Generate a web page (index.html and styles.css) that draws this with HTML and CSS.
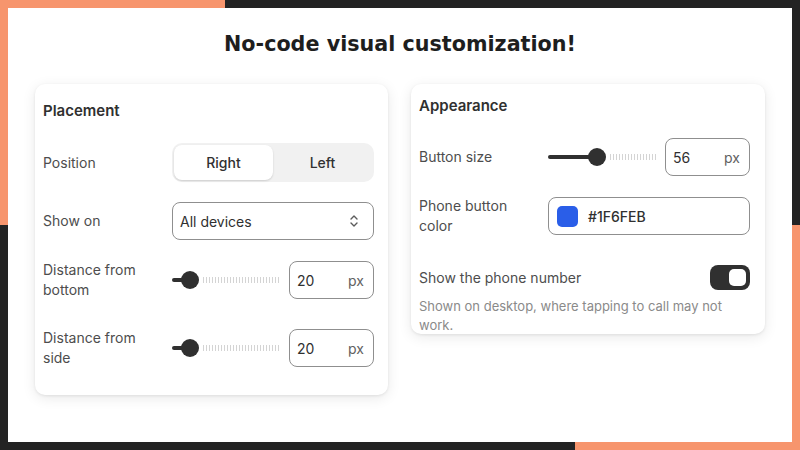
FILE: index.html
```html
<!DOCTYPE html>
<html>
<head>
    <title>No-code visual customization</title>
    <link rel="stylesheet" href="styles.css">
</head>
<body>
    <div class="frame">
        <div class="panel">
            <h1>No-code visual customization!</h1>
            <div class="cards">
                <div class="card card-left">
                    <h2>Placement</h2>
                    <div class="row">
                        <div class="label">Position</div>
                        <div class="segmented">
                            <div class="segment active">Right</div>
                            <div class="segment">Left</div>
                        </div>
                    </div>
                    <div class="row">
                        <div class="label">Show on</div>
                        <div class="select">
                            <span>All devices</span>
                            <svg class="chevrons" width="10" height="16" viewBox="0 0 10 16">
                                <path d="M2 6 L5 3 L8 6" fill="none" stroke="#5c5c5c" stroke-width="1.4" stroke-linecap="round" stroke-linejoin="round"/>
                                <path d="M2 10 L5 13 L8 10" fill="none" stroke="#5c5c5c" stroke-width="1.4" stroke-linecap="round" stroke-linejoin="round"/>
                            </svg>
                        </div>
                    </div>
                    <div class="row">
                        <div class="label">Distance from<br>bottom</div>
                        <div class="slider-group">
                            <div class="slider">
                                <div class="fill" style="width: 18px"></div>
                                <div class="thumb"></div>
                                <div class="rest"></div>
                            </div>
                            <div class="num-input"><span>20</span><span class="unit">px</span></div>
                        </div>
                    </div>
                    <div class="row row-spaced">
                        <div class="label">Distance from<br>side</div>
                        <div class="slider-group">
                            <div class="slider">
                                <div class="fill" style="width: 18px"></div>
                                <div class="thumb"></div>
                                <div class="rest"></div>
                            </div>
                            <div class="num-input"><span>20</span><span class="unit">px</span></div>
                        </div>
                    </div>
                </div>

                <div class="card card-right">
                    <h2>Appearance</h2>
                    <div class="row">
                        <div class="label">Button size</div>
                        <div class="slider-group">
                            <div class="slider">
                                <div class="fill" style="width: 49px"></div>
                                <div class="thumb"></div>
                                <div class="rest"></div>
                            </div>
                            <div class="num-input"><span>56</span><span class="unit">px</span></div>
                        </div>
                    </div>
                    <div class="row">
                        <div class="label">Phone button<br>color</div>
                        <div class="color-input">
                            <div class="swatch"></div>
                            <span>#1F6FEB</span>
                        </div>
                    </div>
                    <div class="toggle-row">
                        <div class="label">Show the phone number</div>
                        <div class="toggle"><div class="knob"></div></div>
                    </div>
                    <p class="help">Shown on desktop, where tapping to call may not work.</p>
                </div>
            </div>
        </div>
    </div>
</body>
</html>
```

FILE: styles.css
```css
body {
    margin: 0;
    padding: 0;
    font-family: Inter, "Noto Sans", sans-serif;
}
.frame {
    width: 800px;
    height: 450px;
    box-sizing: border-box;
    padding: 8px;
    background:
        linear-gradient(#f7956d, #f7956d) left top / 225px 225px no-repeat,
        linear-gradient(#f7956d, #f7956d) right bottom / 225px 225px no-repeat,
        #232323;
}
.panel {
    height: 100%;
    background-color: #ffffff;
    box-sizing: border-box;
    padding: 24px 27px 0 27px;
}
h1 {
    margin: 0;
    text-align: center;
    font-family: "DejaVu Sans", sans-serif;
    font-weight: bold;
    font-size: 20.7px;
    line-height: 24px;
    color: #1e1e1e;
}
.cards {
    display: flex;
    gap: 23px;
    align-items: flex-start;
    margin-top: 28px;
}
.card {
    width: 353px;
    box-sizing: border-box;
    background-color: #ffffff;
    border-radius: 10px;
    box-shadow: 0 1px 3px rgba(0, 0, 0, 0.08), 0 3px 14px rgba(0, 0, 0, 0.09);
    display: flex;
    flex-direction: column;
}
.card-left {
    padding: 17px 14px 27px 8px;
    gap: 20px;
}
.card-right {
    width: 354px;
    height: 250px;
    overflow: hidden;
    padding: 12px 15px 0 8px;
    gap: 20px;
}
h2 {
    margin: 0 0 2px 0;
    font-size: 15px;
    line-height: 20px;
    font-weight: 600;
    color: #303030;
}
.row {
    display: flex;
    align-items: center;
}
.row-spaced {
    margin-top: 8px;
}
.label {
    width: 129px;
    flex-shrink: 0;
    font-size: 14px;
    line-height: 20px;
    color: #4d4d4d;
}
.segmented {
    width: 202px;
    height: 39px;
    box-sizing: border-box;
    padding: 2px;
    background-color: #f1f1f1;
    border-radius: 10px;
    display: flex;
}
.segment {
    flex: 1;
    display: flex;
    align-items: center;
    justify-content: center;
    font-size: 14px;
    font-weight: 500;
    color: #303030;
    border-radius: 8px;
}
.segment.active {
    background-color: #ffffff;
    box-shadow: 0 1px 2px rgba(0, 0, 0, 0.15);
}
.select {
    width: 202px;
    height: 38px;
    box-sizing: border-box;
    border: 1px solid #8f8f8f;
    border-radius: 8px;
    padding: 0 14px 0 7px;
    display: flex;
    align-items: center;
    justify-content: space-between;
    font-size: 14px;
    color: #303030;
}
.slider-group {
    width: 202px;
    display: flex;
    align-items: center;
    gap: 9px;
}
.slider {
    width: 108px;
    height: 20px;
    display: flex;
    align-items: center;
}
.slider .fill {
    height: 4px;
    background-color: #303030;
    border-radius: 2px 0 0 2px;
}
.slider .thumb {
    width: 18px;
    height: 18px;
    margin-left: -9px;
    margin-right: -9px;
    border-radius: 50%;
    background-color: #303030;
    position: relative;
}
.slider .rest {
    flex: 1;
    height: 6px;
    margin-left: 13px;
    background: repeating-linear-gradient(to right, #d4d4d4 0, #d4d4d4 1px, transparent 1px, transparent 3px);
}
.num-input {
    width: 85px;
    height: 38px;
    box-sizing: border-box;
    border: 1px solid #8f8f8f;
    border-radius: 8px;
    padding: 0 9px 0 7px;
    display: flex;
    align-items: center;
    justify-content: space-between;
    font-size: 14px;
    color: #303030;
}
.unit {
    color: #616161;
}
.color-input {
    width: 202px;
    height: 38px;
    box-sizing: border-box;
    border: 1px solid #8f8f8f;
    border-radius: 8px;
    padding: 0 8px;
    display: flex;
    align-items: center;
    gap: 10px;
    font-size: 14px;
    font-weight: 500;
    color: #303030;
}
.swatch {
    width: 21px;
    height: 21px;
    border-radius: 5px;
    background-color: #2a5ee8;
}
.toggle-row {
    display: flex;
    align-items: center;
    justify-content: space-between;
    margin-top: 9px;
}
.toggle-row .label {
    width: auto;
}
.toggle {
    width: 40px;
    height: 25px;
    box-sizing: border-box;
    padding: 4px;
    border-radius: 8px;
    background-color: #303030;
    display: flex;
    justify-content: flex-end;
}
.knob {
    width: 17px;
    height: 17px;
    border-radius: 5px;
    background-color: #ffffff;
}
.help {
    margin: -13px 0 0 0;
    font-size: 13px;
    line-height: 19px;
    color: #8a8a8a;
}
```
